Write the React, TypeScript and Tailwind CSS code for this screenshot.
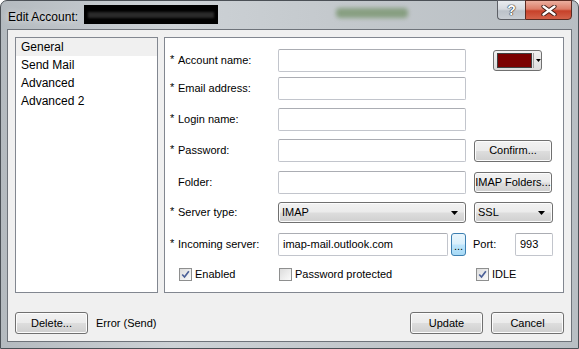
import React from 'react';

const btnCls =
  "flex items-center justify-center whitespace-nowrap rounded-[3px] border border-[#707070] bg-[linear-gradient(#f2f2f2_0%,#ebebeb_48%,#dddddd_52%,#cfcfcf_100%)] shadow-[inset_0_0_0_1px_#fcfcfc] text-[11px] text-black";

const inputCls =
  "h-[23px] rounded-[2px] border border-[#c2c5cc] border-t-[#abadb3] bg-white flex items-center px-[4px] text-[11px] text-black";

function Label({ text, star = true }: { text: string; star?: boolean }) {
  return (
    <div className="w-[108px] flex items-center text-[11px] text-black">
      <span className="w-[8px] text-[11px] leading-none -mt-[3px]">{star ? '*' : ''}</span>
      <span>{text}</span>
    </div>
  );
}

function Select({ value, className }: { value: string; className: string }) {
  return (
    <div
      className={`h-[21px] rounded-[3px] border border-[#707070] bg-[linear-gradient(#f2f2f2_0%,#ebebeb_48%,#dddddd_52%,#cfcfcf_100%)] shadow-[inset_0_0_0_1px_#fcfcfc] flex items-center justify-between pl-[3px] pr-[6px] text-[11px] text-black ${className}`}
    >
      <span>{value}</span>
      <svg width="8" height="4" viewBox="0 0 8 4">
        <path d="M0 0h7L3.5 4z" fill="#000" />
      </svg>
    </div>
  );
}

function Check({ checked, label }: { checked: boolean; label: string }) {
  return (
    <div className="flex items-center gap-[3px] text-[11px] text-black">
      <div className="w-[13px] h-[13px] border border-[#8e8f8f] bg-[linear-gradient(135deg,#dcdcdc,#fbfbfb)] p-[1px] flex items-center justify-center">
        {checked && (
          <svg width="11" height="11" viewBox="0 0 11 11">
            <path d="M1.5 5.5 L4.3 8.6 L9.6 1.4" fill="none" stroke="#4a5f97" strokeWidth="2" />
          </svg>
        )}
      </div>
      <span>{label}</span>
    </div>
  );
}

export default function App() {
  return (
    <div className="w-[579px] h-[349px] overflow-hidden bg-white font-['Liberation_Sans',Arial,sans-serif]">
      <div className="w-[579px] h-[349px] flex flex-col rounded-t-[7px] border border-[#4b5056] bg-[linear-gradient(90deg,#b4babf_0%,#cdd2d6_30%,#c3c8cc_60%,#b8bec3_100%)]">
        {/* title bar */}
        <div className="h-[28px] flex items-start pl-[7px] pr-[6px] shrink-0">
          <span className="mt-[7px] text-[12px] text-black [text-shadow:0_0_6px_#ffffff]">Edit Account:</span>
          <div className="ml-[6px] mt-[4px] w-[134px] h-[19px] bg-black flex items-center px-[4px]">
            <div className="w-full h-[6px] bg-[#2a2a2a] blur-[1px]" />
          </div>
          <div className="ml-[118px] mt-[7px] w-[72px] h-[10px] rounded bg-[#6f8e62] opacity-70 blur-[2px]" />
          <div className="flex-1" />
          <div className="flex -mt-px">
            <div className="w-[28px] h-[20px] rounded-bl-[4px] border border-[#5d6066] border-r-0 bg-[linear-gradient(#e9ecef_0%,#d6dadf_45%,#bcc2c9_55%,#c9ced4_100%)] flex items-center justify-center">
              <span className="text-[14px] font-bold leading-none text-white [text-shadow:0_0_1px_#222,0_0_1px_#222,0_0_1px_#222]">?</span>
            </div>
            <div className="w-[47px] h-[20px] rounded-br-[4px] border border-[#5a2b22] bg-[linear-gradient(#ebaf9f_0%,#dc7d68_45%,#c7412a_55%,#d3624a_100%)] flex items-center justify-center">
              <svg width="16" height="11" viewBox="0 0 16 11">
                <path d="M2.5 1.5 L13.5 9.5 M13.5 1.5 L2.5 9.5" stroke="#3a1a14" strokeWidth="4.2" strokeLinecap="round" />
                <path d="M2.5 1.5 L13.5 9.5 M13.5 1.5 L2.5 9.5" stroke="#ffffff" strokeWidth="2.4" strokeLinecap="round" />
              </svg>
            </div>
          </div>
        </div>

        {/* client area */}
        <div className="mx-[6px] h-[313px] border border-[#6e737a] bg-[#f0f0f0] flex flex-col px-[7px] pt-[7px]">
          <div className="flex gap-[6px] h-[256px]">
            {/* list */}
            <div className="w-[143px] border border-[#828790] bg-white flex flex-col text-[12px] text-black">
              <div className="h-[18px] bg-[#f0f0f0] flex items-center pl-[5px]">General</div>
              <div className="h-[18px] flex items-center pl-[5px]">Send Mail</div>
              <div className="h-[18px] flex items-center pl-[5px]">Advanced</div>
              <div className="h-[18px] flex items-center pl-[5px]">Advanced 2</div>
            </div>

            {/* panel */}
            <div className="w-[400px] border border-[#828790] bg-white flex flex-col pl-[5px] pt-[11px]">
              <div className="flex items-center h-[23px]">
                <Label text="Account name:" />
                <div className={`${inputCls} w-[188px]`} />
                <div className="ml-[27px] w-[49px] h-[21px] rounded-[3px] border border-[#707070] bg-[linear-gradient(#f2f2f2,#dcdcdc)] flex items-center pl-[3px]">
                  <div className="w-[36px] h-[15px] border border-[#404040] bg-[#7b0000]" />
                  <div className="ml-[1px] w-px h-[15px] bg-[#a0a0a0]" />
                  <svg className="ml-[2px]" width="5" height="3" viewBox="0 0 5 3">
                    <path d="M0 0h5L2.5 3z" fill="#000" />
                  </svg>
                </div>
              </div>
              <div className="flex items-center h-[23px] mt-[5px]">
                <Label text="Email address:" />
                <div className={`${inputCls} w-[188px]`} />
              </div>
              <div className="flex items-center h-[23px] mt-[8px]">
                <Label text="Login name:" />
                <div className={`${inputCls} w-[188px]`} />
              </div>
              <div className="flex items-center h-[23px] mt-[8px]">
                <Label text="Password:" />
                <div className={`${inputCls} w-[188px]`} />
                <div className={`${btnCls} ml-[8px] w-[78px] h-[22px]`}>Confirm...</div>
              </div>
              <div className="flex items-center h-[23px] mt-[9px]">
                <Label text="Folder:" star={false} />
                <div className={`${inputCls} w-[188px]`} />
                <div className={`${btnCls} ml-[8px] w-[78px] h-[21px]`}>IMAP Folders...</div>
              </div>
              <div className="flex items-center h-[21px] mt-[8px]">
                <Label text="Server type:" />
                <Select value="IMAP" className="w-[188px]" />
                <Select value="SSL" className="ml-[8px] w-[79px]" />
              </div>
              <div className="flex items-center h-[23px] mt-[10px]">
                <Label text="Incoming server:" />
                <div className={`${inputCls} w-[170px] border-[#7eb4ea]`}>imap-mail.outlook.com</div>
                <div className="ml-[3px] w-[15px] h-[23px] rounded-[3px] border border-[#3c7fb1] bg-[linear-gradient(#eaf6fd_0%,#d9f0fc_48%,#bee6fd_52%,#a7d9f5_100%)] flex items-end justify-center pb-[3px] text-[11px] leading-none text-black">
                  ...
                </div>
                <span className="ml-[7px] w-[42px] text-[11px] text-black">Port:</span>
                <div className={`${inputCls} w-[38px]`}>993</div>
              </div>
              <div className="flex items-center h-[13px] mt-[12px]">
                <div className="pl-[9px] w-[108px]">
                  <Check checked label="Enabled" />
                </div>
                <div className="pl-[1px] w-[198px]">
                  <Check checked={false} label="Password protected" />
                </div>
                <Check checked label="IDLE" />
              </div>
            </div>
          </div>

          {/* bottom buttons */}
          <div className="flex items-center mt-[19px] h-[22px]">
            <div className={`${btnCls} w-[73px] h-[22px]`}>Delete...</div>
            <span className="ml-[8px] text-[11px] text-black">Error (Send)</span>
            <div className="flex-1" />
            <div className={`${btnCls} w-[73px] h-[22px]`}>Update</div>
            <div className={`${btnCls} ml-[8px] w-[73px] h-[22px]`}>Cancel</div>
          </div>
        </div>
      </div>
    </div>
  );
}
